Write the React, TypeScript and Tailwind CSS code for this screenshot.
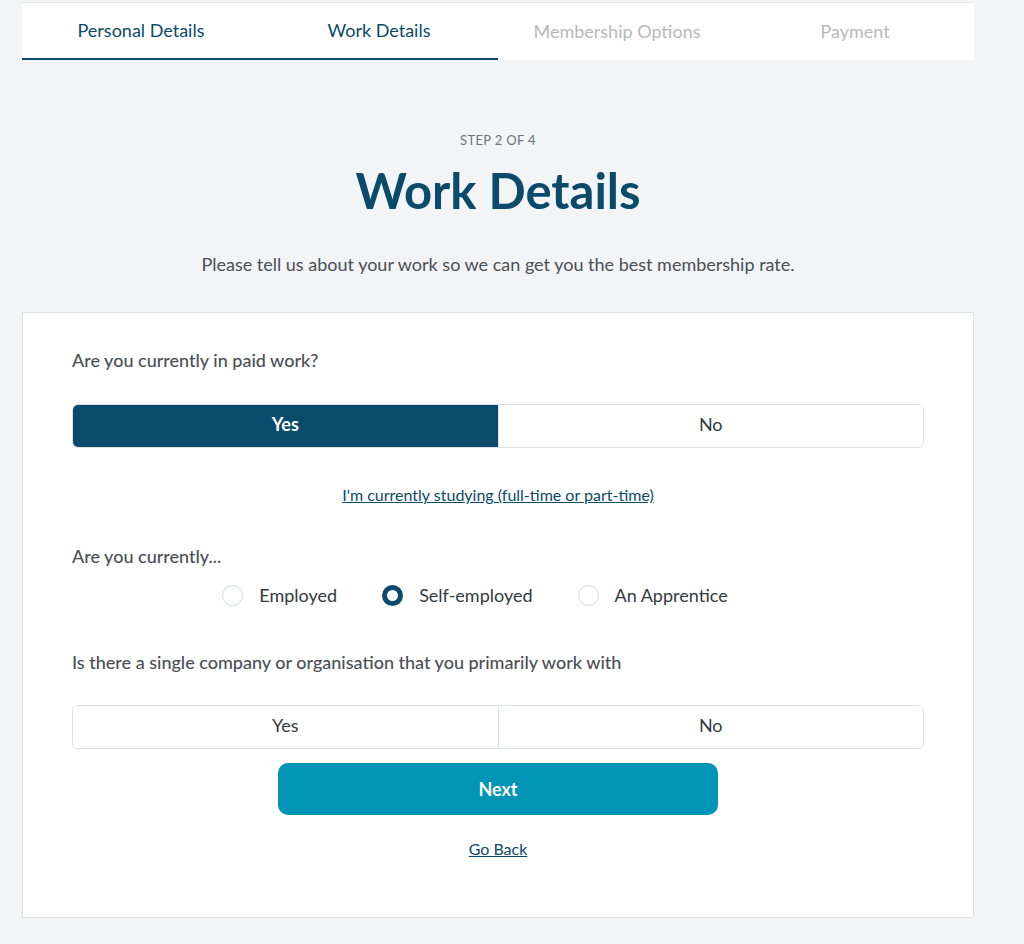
import { useState } from 'react';

const tabs = ['Personal Details', 'Work Details', 'Membership Options', 'Payment'];

function Toggle({ value, onChange }: { value: string | null; onChange: (v: string) => void }) {
  return (
    <div className="flex h-[44px] rounded-md border border-[#dde1e5] overflow-hidden">
      {['Yes', 'No'].map((opt, i) => {
        const active = value === opt;
        return (
          <button
            key={opt}
            onClick={() => onChange(opt)}
            className={`flex-1 text-[18px] pb-[3px] ${i === 1 ? 'border-l border-[#dde1e5]' : ''} ${
              active ? 'bg-[#0a4a6b] text-white font-bold' : 'bg-white text-[#333a40]'
            }`}
          >
            {opt}
          </button>
        );
      })}
    </div>
  );
}

export default function App() {
  const [paid, setPaid] = useState<string | null>('Yes');
  const [kind, setKind] = useState('Self-employed');
  const [single, setSingle] = useState<string | null>(null);

  return (
    <div className="min-h-[944px] bg-[#f3f4f6] pt-[2px] pb-[26px] font-['Lato',sans-serif]">
      <div className="mx-[22px] w-[952px]">
        {/* Step tabs */}
        <div className="flex bg-white border-t border-[#e3e6e9] h-[58px]">
          {tabs.map((t, i) => (
            <div
              key={t}
              className={`flex-1 flex items-center justify-center text-[18px] ${
                i < 2 ? 'text-[#0a4a6b] border-b-[2px] border-[#0a4a6b]' : 'text-[#b8b8bb]'
              }`}
            >
              {t}
            </div>
          ))}
        </div>

        {/* Heading */}
        <div className="text-center mt-[74px]">
          <div className="text-[13px] text-[#6b7480] uppercase tracking-wide leading-none">Step 2 of 4</div>
          <h1 className="mt-[19px] text-[49px] font-bold text-[#0a4a6b] leading-none">Work Details</h1>
          <p className="mt-[40px] text-[18px] text-[#4a4f55] leading-none">
            Please tell us about your work so we can get you the best membership rate.
          </p>
        </div>

        {/* Card */}
        <div className="mt-[39px] bg-white border border-[#dcdfe3] px-[49px] pt-[34px] pb-[56px]">
          <div className="text-[18px] text-[#4a4f55] font-medium">Are you currently in paid work?</div>
          <div className="mt-[30px]">
            <Toggle value={paid} onChange={setPaid} />
          </div>

          <div className="mt-[35px] text-center">
            <a href="#" className="text-[16px] text-[#0a4a6b] underline">
              I'm currently studying (full-time or part-time)
            </a>
          </div>

          <div className="mt-[36px] text-[18px] text-[#4a4f55] font-medium">Are you currently...</div>
          <div className="mt-[12px] flex justify-center pr-[46px] gap-[45px]">
            {['Employed', 'Self-employed', 'An Apprentice'].map((k) => (
              <label key={k} className="flex items-center gap-[16px] cursor-pointer" onClick={() => setKind(k)}>
                <span
                  className={`w-[21px] h-[21px] rounded-full ${
                    kind === k ? 'border-[5px] border-[#0a4a6b]' : 'border border-[#d4d8dc]'
                  }`}
                />
                <span className="text-[18px] text-[#333a40]">{k}</span>
              </label>
            ))}
          </div>

          <div className="mt-[40px] text-[18px] text-[#4a4f55] font-medium">
            Is there a single company or organisation that you primarily work with
          </div>
          <div className="mt-[29px]">
            <Toggle value={single} onChange={setSingle} />
          </div>

          <div className="mt-[14px] flex justify-center">
            <button className="w-[440px] h-[52px] rounded-[10px] bg-[#0095b6] text-white font-bold text-[18px]">
              Next
            </button>
          </div>
          <div className="mt-[22px] text-center">
            <a href="#" className="text-[16px] text-[#0a4a6b] underline">
              Go Back
            </a>
          </div>
        </div>
      </div>
    </div>
  );
}
